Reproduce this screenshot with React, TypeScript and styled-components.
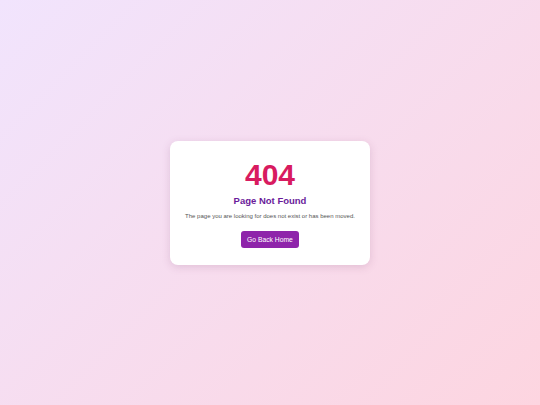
import React from 'react';
import styled, {createGlobalStyle} from "styled-components";

const GlobalStyle = createGlobalStyle`
    html, body {
        margin: 0;
        padding: 0;
        height: 100%;
    }
    body {
        font-family: "Liberation Sans", Arial, sans-serif;
    }
    #root {
        height: 100%;
    }
`;

export default function App() {
    return (
        <>
            <GlobalStyle/>
            <Page>
                <Card>
                    <Code>404</Code>
                    <Title>Page Not Found</Title>
                    <Message>The page you are looking for does not exist or has been moved.</Message>
                    <HomeButton href="#">Go Back Home</HomeButton>
                </Card>
            </Page>
        </>
    );
}

const Page = styled.main`
    min-height: 100vh;
    display: flex;
    align-items: center;
    justify-content: center;
    background: linear-gradient(135deg, #f1e4fd 0%, #fdd5e0 100%);
`;

const Card = styled.section`
    width: 200px;
    box-sizing: border-box;
    padding: 18px 12px 17px;
    background: #fff;
    border-radius: 8px;
    box-shadow: 0 2px 8px rgba(120, 60, 110, 0.18);
    display: flex;
    flex-direction: column;
    align-items: center;
    text-align: center;
`;

const Code = styled.h1`
    margin: 0;
    font-size: 30px;
    font-weight: 700;
    line-height: 32px;
    color: #d81b60;
`;

const Title = styled.h2`
    margin: 4px 0 0;
    font-size: 9.5px;
    font-weight: 700;
    line-height: 12px;
    color: #6a1b9a;
`;

const Message = styled.p`
    margin: 5px 0 11px;
    font-size: 6px;
    line-height: 8px;
    color: #555;
    white-space: nowrap;
`;

const HomeButton = styled.a`
    display: inline-block;
    padding: 0 6px;
    height: 17px;
    line-height: 17px;
    border-radius: 3px;
    background: #8e24aa;
    color: #fff;
    font-size: 6.75px;
    text-decoration: none;
`;
